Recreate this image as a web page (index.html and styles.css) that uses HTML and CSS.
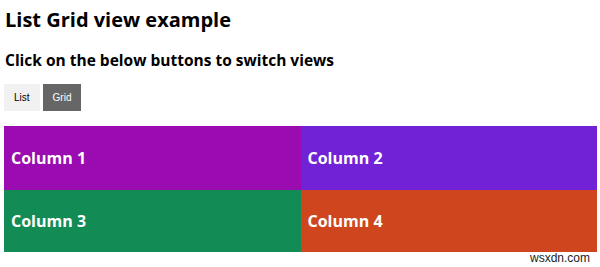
FILE: index.html
```html
<!DOCTYPE html>
<html>
<head>
<meta charset="utf-8">
<link rel="stylesheet" href="styles.css">
</head>
<body>
<h1 class="title">List Grid view example</h1>
<h2 class="subtitle">Click on the below buttons to switch views</h2>
<div class="toolbar">
  <button class="btn">List</button>
  <button class="btn active">Grid</button>
</div>
<div class="grid">
  <div class="cell c1">Column 1</div>
  <div class="cell c2">Column 2</div>
  <div class="cell c3">Column 3</div>
  <div class="cell c4">Column 4</div>
</div>
<div class="watermark">wsxdn.com</div>
</body>
</html>
```
FILE: styles.css
```css
html, body {
  margin: 0;
  background: #fff;
}
body {
  padding: 0 3px 0 4px;
  font-family: "Open Sans", "Noto Sans", sans-serif;
  color: #000;
  position: relative;
  height: 267px;
  box-sizing: border-box;
}
.title {
  margin: 0;
  padding-top: 6px;
  padding-left: 1px;
  font-size: 20px;
  line-height: 28px;
  font-weight: 700;
}
.subtitle {
  margin: 15px 0 0;
  padding-left: 1px;
  font-size: 15.5px;
  line-height: 22px;
  font-weight: 700;
}
.toolbar {
  display: flex;
  gap: 3px;
  margin-top: 13px;
}
.btn {
  border: 0;
  height: 27px;
  padding: 0 10px;
  font-family: "Liberation Sans", Arial, sans-serif;
  font-size: 10px;
  background: #f1f1f1;
  color: #000;
}
.btn.active {
  background: #666;
  color: #fff;
}
.grid {
  margin-top: 15px;
  display: grid;
  grid-template-columns: 1fr 1fr;
  grid-template-rows: 64px 62px;
}
.cell {
  display: flex;
  align-items: center;
  padding-left: 7px;
  color: #fff;
  font-size: 16px;
  font-weight: 700;
}
.c1 { background: #9a0bb0; }
.c2 { background: #7122d6; }
.c3 { background: #128c54; }
.c4 { background: #cf461e; }
.watermark {
  position: absolute;
  right: 10px;
  bottom: 2px;
  font-family: "Liberation Sans", Arial, sans-serif;
  font-size: 12px;
  color: #222;
}
```
